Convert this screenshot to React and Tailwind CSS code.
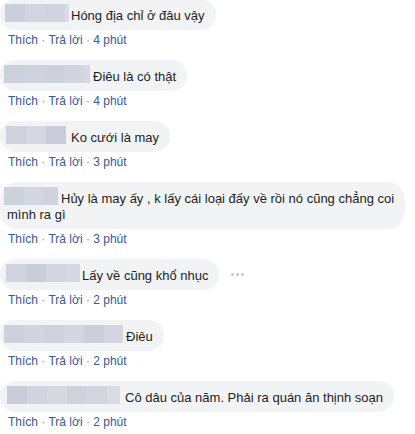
import React from "react";

const comments = [
  { tiles: [["#cbcfdb", 20], ["#d3d6e0", 20], ["#d1d4df", 20], ["#dadde6", 4]], ml: 1, gap: 2, text: "Hóng địa chỉ ở đâu vậy", time: "4 phút" },
  { tiles: [["#ccd0dc", 20], ["#d0d3de", 20], ["#cdd1dc", 20], ["#d2d5e0", 20], ["#d6d9e2", 6]], ml: 0, gap: 3, text: "Điêu là có thật", time: "4 phút" },
  { tiles: [["#cfd2dd", 20], ["#d5d8e1", 20], ["#c9cdd9", 20]], ml: 2, gap: 5, text: "Ko cưới là may", time: "3 phút" },
  { tiles: [["#cdd1dc", 20], ["#d3d6e0", 20], ["#d0d3de", 14]], ml: 0, gap: 3, text: "Hủy là may ấy , k lấy cái loại đấy về rồi nó cũng chẳng coi", text2: "mình ra gì", time: "3 phút" },
  { tiles: [["#d1d4df", 20], ["#c9cdd9", 20], ["#d3d6e0", 20], ["#d6d9e2", 14]], ml: 2, gap: 2, text: "Lấy về cũng khổ nhục", time: "2 phút", dots: true },
  { tiles: [["#cdd1dc", 20], ["#d2d5df", 20], ["#cfd2dd", 20], ["#d4d7e1", 20], ["#cbcfdb", 20], ["#d3d6e0", 19]], ml: 0, gap: 3, text: "Điêu", time: "2 phút" },
  { tiles: [["#c9ccd9", 20], ["#d2d5df", 20], ["#d6d9e2", 20], ["#cfd2dd", 20], ["#d3d6e0", 20], ["#d8dbe4", 13]], ml: 3, gap: 5, text: "Cô dâu của năm. Phải ra quán ăn thịnh soạn", time: "2 phút" },
];

function Blur({ tiles, ml, gap }) {
  return (
    <span
      className="inline-flex h-[18px] align-[-2px]"
      style={{ marginLeft: ml, marginRight: gap }}
    >
      {tiles.map(([c, w], i) => (
        <span key={i} className="h-full" style={{ background: c, width: w }} />
      ))}
    </span>
  );
}

export default function App() {
  return (
    <div className="w-[415px] h-[434px] overflow-hidden bg-white font-['Liberation_Sans',Arial,sans-serif]">
      <div className="flex flex-col -mt-[1px]">
        {comments.map((c, i) => (
          <div key={i} className="flex flex-col items-start mb-[12px]">
            <div className="flex items-center">
              <div className="inline-block whitespace-nowrap rounded-[18px] bg-[#f2f3f5] pl-[4px] pr-[11px] pt-[5px] pb-[6px] text-[13px] leading-[16px] text-[#1c1e21]">
                <Blur tiles={c.tiles} ml={c.ml} gap={c.gap} />
                {c.text}
                {c.text2 && (
                  <>
                    <br />
                    <span className="pl-[3px]">{c.text2}</span>
                  </>
                )}
              </div>
              {c.dots && (
                <div className="ml-[12px] flex gap-[2px]">
                  <span className="h-[3px] w-[3px] rounded-full bg-[#c4c8ce]" />
                  <span className="h-[3px] w-[3px] rounded-full bg-[#c4c8ce]" />
                  <span className="h-[3px] w-[3px] rounded-full bg-[#c4c8ce]" />
                </div>
              )}
            </div>
            <div className="mt-[2px] pl-[8px] text-[12px] leading-[16px] text-[#385898]">
              <span>Thích</span>
              <span className="text-[#90949c]"> · </span>
              <span>Trả lời</span>
              <span className="text-[#90949c]"> · </span>
              <span>{c.time}</span>
            </div>
          </div>
        ))}
      </div>
    </div>
  );
}
